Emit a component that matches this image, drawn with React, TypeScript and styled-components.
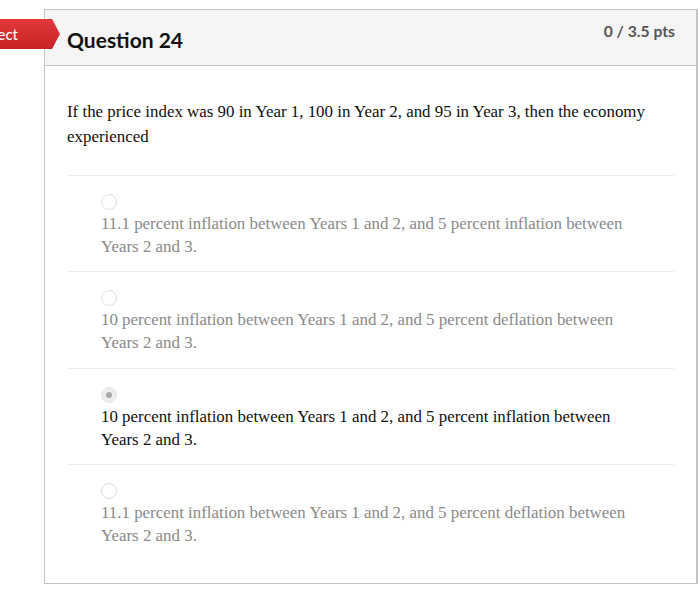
import React from "react";
import styled, { createGlobalStyle } from "styled-components";

const Global = createGlobalStyle`
  html, body { margin: 0; padding: 0; background: #fff; }
  body { font-family: "Liberation Serif", serif; }
`;

const Page = styled.div`
  position: relative;
  padding: 9px 2px 0 44px;
  height: 593px;
  box-sizing: border-box;
  overflow: hidden;
`;

const Tag = styled.div`
  position: absolute;
  right: 640px;
  top: 19px;
  height: 30px;
  padding: 0 42px 0 12px;
  display: flex;
  align-items: center;
  color: #fff;
  font-family: Lato, sans-serif;
  font-size: 15px;
  font-weight: 500;
  background: linear-gradient(#e2393b, #c82225);
  clip-path: polygon(0 0, calc(100% - 8px) 0, 100% 50%, calc(100% - 8px) 100%, 0 100%);
  z-index: 2;
`;

const Card = styled.div`
  border: 1px solid #c4c4c4;
  border-right-width: 2px;
  height: 575px;
  box-sizing: border-box;
  display: flex;
  flex-direction: column;
`;

const Header = styled.div`
  height: 56px;
  box-sizing: border-box;
  background: #f5f5f5;
  border-bottom: 1px solid #c4c8cb;
  display: flex;
  justify-content: space-between;
  padding: 0 21px 0 22px;
`;

const Title = styled.h2`
  margin: 0;
  font-family: Lato, sans-serif;
  font-weight: 700;
  font-size: 21px;
  color: #111;
  line-height: 60px;
`;

const Points = styled.div`
  font-family: Lato, sans-serif;
  font-weight: 700;
  font-size: 15.7px;
  color: #555;
  padding-top: 12px;
`;

const Body = styled.div`
  padding: 33px 22px 0 22px;
`;

const QuestionText = styled.p`
  margin: 0 0 26px;
  font-size: 16.9px;
  line-height: 25px;
  color: #111;
`;

const Option = styled.div`
  border-top: 1px solid #ebebeb;
  padding: 18px 40px 13px 34px;
  height: 96.4px;
  box-sizing: border-box;
  display: flex;
  flex-direction: column;
  align-items: flex-start;
`;

const Radio = styled.span<{ $checked?: boolean }>`
  width: 16px;
  height: 16px;
  border-radius: 50%;
  box-sizing: border-box;
  border: 1px solid ${(p) => (p.$checked ? "#e6e6e6" : "#dedede")};
  background: ${(p) => (p.$checked ? "#ececec" : "#fff")};
  display: flex;
  align-items: center;
  justify-content: center;
  margin-bottom: 2px;
  &::after {
    content: "";
    display: ${(p) => (p.$checked ? "block" : "none")};
    width: 6px;
    height: 6px;
    border-radius: 50%;
    background: #a8a8a8;
  }
`;

const OptionText = styled.div<{ $selected?: boolean }>`
  font-size: 16.9px;
  line-height: 23px;
  color: ${(p) => (p.$selected ? "#111" : "#8a8a8a")};
`;

const options = [
  "11.1 percent inflation between Years 1 and 2, and 5 percent inflation between Years 2 and 3.",
  "10 percent inflation between Years 1 and 2, and 5 percent deflation between Years 2 and 3.",
  "10 percent inflation between Years 1 and 2, and 5 percent inflation between Years 2 and 3.",
  "11.1 percent inflation between Years 1 and 2, and 5 percent deflation between Years 2 and 3.",
];

export default function App() {
  return (
    <>
      <Global />
      <Page>
        <Tag>Incorrect</Tag>
        <Card>
          <Header>
            <Title>Question 24</Title>
            <Points>0 / 3.5 pts</Points>
          </Header>
          <Body>
            <QuestionText>
              If the price index was 90 in Year 1, 100 in Year 2, and 95 in Year 3, then the economy experienced
            </QuestionText>
            {options.map((o, i) => (
              <Option key={i}>
                <Radio $checked={i === 2} />
                <OptionText $selected={i === 2}>{o}</OptionText>
              </Option>
            ))}
          </Body>
        </Card>
      </Page>
    </>
  );
}
